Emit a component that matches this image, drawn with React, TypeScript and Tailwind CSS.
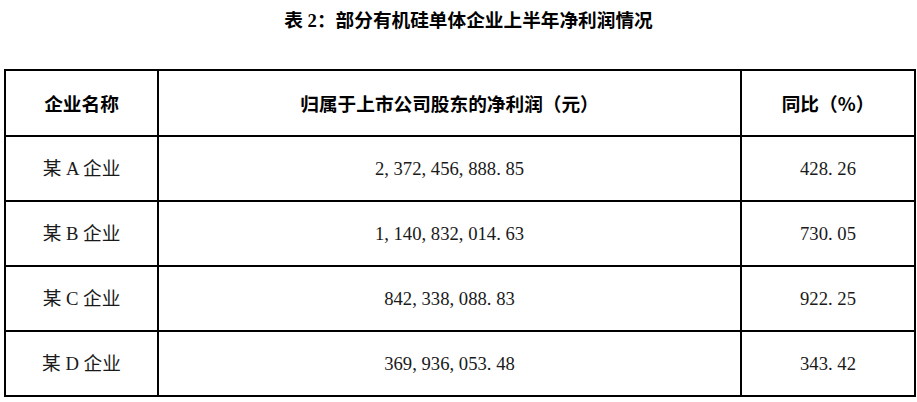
const ROWS = [
  { name: "某 A 企业", profit: "2,372,456,888.85", yoy: "428.26" },
  { name: "某 B 企业", profit: "1,140,832,014.63", yoy: "730.05" },
  { name: "某 C 企业", profit: "842,338,088.83", yoy: "922.25" },
  { name: "某 D 企业", profit: "369,936,053.48", yoy: "343.42" },
];

// SimSun-style numbers: punctuation takes a half-width cell like the digits
function Num({ value }: { value: string }) {
  return (
    <span className="whitespace-nowrap">
      {value.split("").map((ch, i) =>
        ch === "," || ch === "." ? (
          <span key={i} className="inline-block w-[0.5em] text-left">
            {ch}
          </span>
        ) : (
          <span key={i}>{ch}</span>
        )
      )}
    </span>
  );
}

export default function App() {
  return (
    <div className="min-h-screen w-[917px] bg-white text-black">
      <h1 className="pl-[20px] pt-[7px] text-center text-[18.67px] font-bold leading-[28px] [font-family:'Liberation_Serif','Noto_Sans_CJK_SC',sans-serif]">
        表 2：部分有机硅单体企业上半年净利润情况
      </h1>
      <table className="ml-[4px] mt-[34px] w-[910px] table-fixed border-collapse border-2 border-black text-[18.67px] [font-family:'Liberation_Serif','Noto_Sans_CJK_SC',serif]">
        <colgroup>
          <col className="w-[153px]" />
          <col className="w-[583px]" />
          <col className="w-[174px]" />
        </colgroup>
        <thead>
          <tr className="h-[66px]">
            <th className="border-2 border-black text-center font-bold [font-family:'Noto_Sans_CJK_SC',sans-serif]">
              企业名称
            </th>
            <th className="border-2 border-black text-center font-bold [font-family:'Noto_Sans_CJK_SC',sans-serif]">
              归属于上市公司股东的净利润（元）
            </th>
            <th className="border-2 border-black text-center font-bold [font-family:'Noto_Sans_CJK_SC',sans-serif]">
              同比（%）
            </th>
          </tr>
        </thead>
        <tbody>
          {ROWS.map((row) => (
            <tr key={row.name} className="h-[65px] text-[#1a1a1a]">
              <td className="border-2 border-black text-center">{row.name}</td>
              <td className="border-2 border-black text-center">
                <Num value={row.profit} />
              </td>
              <td className="border-2 border-black text-center">
                <Num value={row.yoy} />
              </td>
            </tr>
          ))}
        </tbody>
      </table>
    </div>
  );
}
